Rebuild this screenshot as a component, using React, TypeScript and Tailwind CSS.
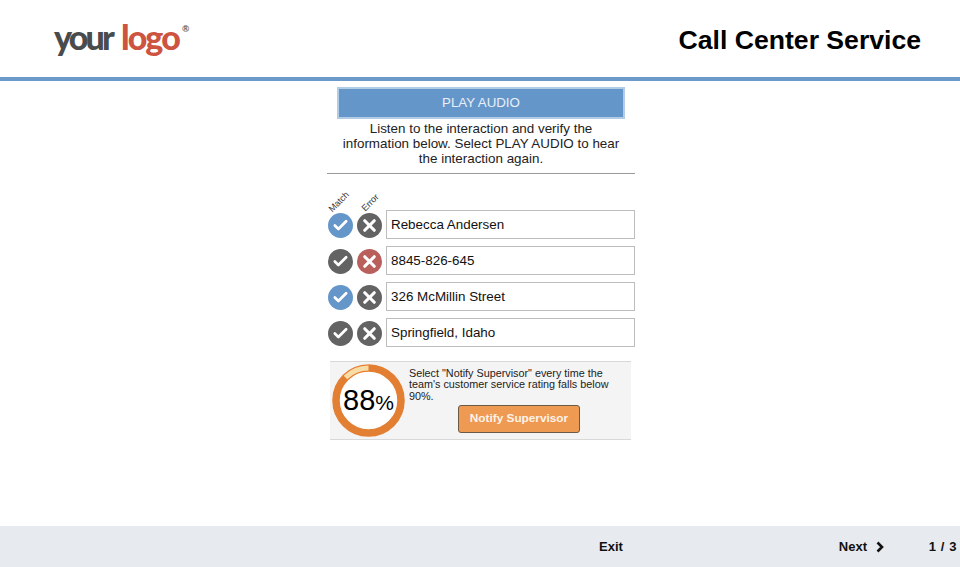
import { Check, X } from 'lucide-react'

const rows = [
  { text: 'Rebecca Andersen', match: true, error: false },
  { text: '8845-826-645', match: false, error: true },
  { text: '326 McMillin Street', match: true, error: false },
  { text: 'Springfield, Idaho', match: false, error: false },
]

function Mark({ kind, active }: { kind: 'match' | 'error'; active: boolean }) {
  const isMatch = kind === 'match'
  return (
    <span
      className={`flex h-[25px] w-[25px] items-center justify-center rounded-full ${
        active ? (isMatch ? 'bg-[#6596c9]' : 'bg-[#b9605c]') : 'bg-[#636363]'
      }`}
    >
      {isMatch ? (
        <Check size={17} strokeWidth={3.8} color="#fff" />
      ) : (
        <X size={19} strokeWidth={4} color="#fff" />
      )}
    </span>
  )
}

function Donut() {
  return (
    <div className="relative h-[73px] w-[73px] shrink-0">
      <svg width="73" height="73" viewBox="0 0 73 73">
        <circle cx="36.5" cy="36.5" r="32.5" fill="#fff" stroke="#e37f32" strokeWidth="7.5" />
        <path d="M13.5 13.5 A32.5 32.5 0 0 1 36.5 4" fill="none" stroke="#fadca6" strokeWidth="5" />
      </svg>
      <div className="absolute inset-0 flex items-center justify-center text-black">
        <span className="text-[29px] leading-none">88</span>
        <span className="text-[21px] leading-none mt-[3px]">%</span>
      </div>
    </div>
  )
}

export default function App() {
  return (
    <div className="flex h-[567px] w-[960px] flex-col overflow-hidden bg-white font-['Liberation_Sans',Arial,sans-serif] text-black">
      <header className="flex h-[77px] items-center justify-between pl-[54px] pr-[39px]">
        <div className="flex items-start font-['Lato',sans-serif] text-[34px] leading-none font-black -mt-[4px]">
          <span className="tracking-[-2.8px] text-[#4a4b4d]">your</span>
          <span className="ml-[9px] tracking-[-1.9px] text-[#cd5440]">logo</span>
          <span className="ml-[3px] mt-[4px] text-[9px] text-[#77787a]">®</span>
        </div>
        <h1 className="mt-[3px] text-[26.6px] leading-none font-bold">Call Center Service</h1>
      </header>
      <div className="h-[4px] bg-[#6b9acb]" />

      <main className="mx-auto flex w-[308px] flex-1 translate-x-px flex-col">
        <button className="mx-[10px] mt-[6px] h-[32px] border-2 border-[#b3cce5] bg-[#6596c9] text-[13.3px] text-[#e9f0f8]">
          PLAY AUDIO
        </button>
        <p className="mt-[2px] border-b border-[#999] px-[12px] pb-[7px] text-center text-[13.4px] leading-[15px] text-[#222]">
          Listen to the interaction and verify the information below. Select PLAY AUDIO to hear the interaction again.
        </p>

        <div className="flex h-[36px] items-end gap-[4px] pl-[1px] text-[9px] leading-none text-[#333]">
          <span className="w-[25px] -rotate-45 pb-[4px] text-center">Match</span>
          <span className="ml-[2px] w-[25px] -rotate-45 pb-[3px] text-center">Error</span>
        </div>

        <div className="flex flex-col gap-[7px]">
          {rows.map((row) => (
            <div key={row.text} className="flex items-center">
              <div className="mt-px flex w-[59px] gap-[4px] pl-[1px]">
                <Mark kind="match" active={row.match} />
                <Mark kind="error" active={row.error} />
              </div>
              <div className="flex h-[29px] flex-1 items-center border border-[#bdbdbd] pl-[4px] pt-[2px] text-[13.4px] text-[#111]">
                {row.text}
              </div>
            </div>
          ))}
        </div>

        <section className="ml-[3px] mr-[4px] mt-[14px] flex h-[79px] items-center gap-[4px] border-y border-[#d8d8d8] bg-[#f4f4f4] pl-[2px]">
          <Donut />
          <div className="flex flex-col pr-[6px]">
            <p className="text-[10.8px] leading-[11.5px] text-[#222]">
              Select "Notify Supervisor" every time the team's customer service rating falls below 90%.
            </p>
            <button className="mt-[3px] ml-[49px] h-[28px] w-[122px] rounded-[3px] border border-[#6b5a48] bg-[#ee9a52] text-[11.8px] font-bold text-[#fdf3e8]">
              Notify Supervisor
            </button>
          </div>
        </section>
      </main>

      <footer className="flex h-[41px] items-center bg-[#e7eaee] text-[13px] font-bold text-[#111]">
        <span className="ml-[599px]">Exit</span>
        <span className="ml-[216px] flex items-center gap-[8px]">
          Next
          <svg width="10" height="12" viewBox="0 0 10 12">
            <path d="M2.5 1.5 L7 6 L2.5 10.5" fill="none" stroke="#111" strokeWidth="2.6" />
          </svg>
        </span>
        <span className="ml-auto mr-[3px] tracking-[0.6px]">1 / 3</span>
      </footer>
    </div>
  )
}
